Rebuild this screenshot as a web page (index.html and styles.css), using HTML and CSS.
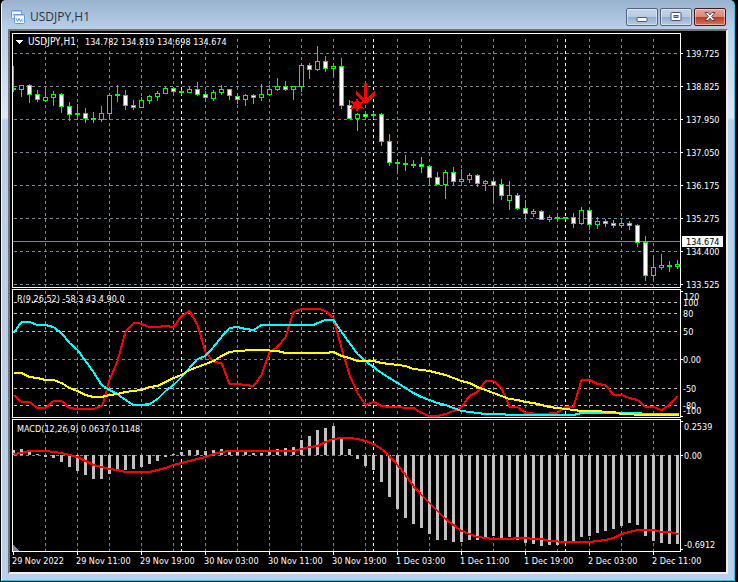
FILE: index.html
```html
<!DOCTYPE html>
<html lang="en">
<head>
<meta charset="utf-8">
<title>USDJPY,H1</title>
<link rel="stylesheet" href="styles.css">
</head>
<body>
<main class="window">
  <header class="titlebar">
    <svg class="app-icon" viewBox="0 0 16 16" aria-hidden="true">
      <rect x="1.500" y="1.500" width="10" height="8" rx="1" fill="#f4f9ff" stroke="#5f9ae0"/>
      <path d="M1.500 2h10" stroke="#5f9ae0"/>
      <path d="M3 6.500l1-1.500 1 1" fill="none" stroke="#5f9ae0"/>
      <rect x="4.500" y="5.500" width="10" height="9" rx="1" fill="#f4f9ff" stroke="#5f9ae0"/>
      <path d="M4.500 6h10" stroke="#5f9ae0"/>
      <path d="M6 9l1.500 3.500 1.500-3 1.500 3 1-2 1 2" fill="none" stroke="#5f9ae0"/>
    </svg>
    <h1 class="title">USDJPY,H1</h1>
    <button class="control" type="button" aria-label="Minimize">
      <svg viewBox="0 0 12 12"><rect x="1" y="6.500" width="10" height="4" rx="1" fill="#fff" stroke="#4c5567"/></svg>
    </button>
    <button class="control" type="button" aria-label="Maximize">
      <svg viewBox="0 0 12 12"><rect x="1" y="1.500" width="10" height="8" rx="1" fill="#fff" stroke="#4c5567"/><rect x="4" y="4.500" width="4" height="2" fill="#9bb6d3" stroke="#4c5567"/></svg>
    </button>
    <button class="control close" type="button" aria-label="Close">
      <svg viewBox="0 0 12 12"><path d="M1 1.500h3L6 3.800 8 1.500h3L7.700 5.500 11 9.500H8L6 7.200 4 9.500H1L4.300 5.500z" fill="#fff" stroke="#4c4a5c"/></svg>
    </button>
  </header>
  <section class="client">
    <svg class="pane" id="price" viewBox="10 31 716 257" role="img" aria-label="Price chart"></svg>
    <svg class="pane" id="range" viewBox="10 288 716 130" role="img" aria-label="R indicator"></svg>
    <svg class="pane" id="macd" viewBox="10 418 716 154" role="img" aria-label="MACD indicator"></svg>
  </section>
</main>
<script src="chart.js"></script>
</body>
</html>
```
FILE: styles.css
```css
* { box-sizing: border-box; }

body {
  margin: 0;
  padding: 0 3px 1px 1px;
  background: #000;
}

.window {
  padding: 0 6px 6px;
  border: solid;
  border-width: 0 1px 1px;
  border-color: #fff #3cc4e4 #3cc4e4 #f4f8fc;
  border-radius: 5px 5px 0 0;
  background: linear-gradient(#99b2cf 0, #b9d1ea 30px, #dce7f5 118px, #b9cfea 120px);
}

.titlebar {
  display: flex;
  align-items: center;
  gap: 2px;
  height: 29px;
  padding: 5px 2px 0 2px;
}

.app-icon {
  width: 16px;
  height: 16px;
}

.title {
  flex: 1;
  margin: 0;
  padding-left: 2px;
  font: 12px/16px "Open Sans", "Noto Sans", sans-serif;
  color: #2b3340;
}

.control {
  display: flex;
  align-items: center;
  justify-content: center;
  width: 32px;
  height: 18px;
  padding: 0;
  border: 1px solid #53647c;
  border-radius: 2px;
  background: linear-gradient(#c3d5e9 0, #b5cae2 48%, #92aecb 50%, #b4cce5 100%);
  box-shadow: inset 0 0 0 1px #ffffff70;
}

.control svg {
  width: 12px;
  height: 12px;
}

.close {
  border-color: #43151d;
  background: linear-gradient(#e6a59b 0, #d98877 48%, #b93a22 50%, #d17560 100%);
}

.client {
  border: 2px solid;
  border-color: #77726f #f0efed #f0efed #77726f;
  background: #000;
}

.pane {
  display: block;
  width: 100%;
  height: auto;
  overflow: visible;
  shape-rendering: crispEdges;
  font-family: "DejaVu Sans Condensed", "DejaVu Sans", sans-serif;
  font-size: 9px;
}

.pane text { fill: #fff; }
.pane .symbol { font-size: 10px; }
.pane .bid-text { fill: #000; }
.frame { fill: none; stroke: #fff; }
.tick { stroke: #fff; }
.grid { stroke: #778899; stroke-dasharray: 3 3; }
.level { stroke: #c0c0c0; stroke-dasharray: 3 3; }
.day { stroke: #fff; stroke-dasharray: 3 3; }
.bid { stroke: #778899; }
.bid-box { fill: #fff; }
.wick { stroke: #00ff00; }
.doji { fill: #00ff00; }
.up { fill: #000; stroke: #00ff00; }
.down { fill: #fff; stroke: #00ff00; }
.bar { fill: #c0c0c0; }
.line { fill: none; stroke-width: 2; }
.red { stroke: #ff0000; }
.cyan { stroke: #00ffff; }
.yellow { stroke: #ffff00; }
.signal { fill: #ff0000; }
.corner { fill: #778899; }
```
FILE: chart.js
```js
const NS = "http://www.w3.org/2000/svg";
const LEFT = 12, RIGHT = 680, FIRST = 13, STEP = 8;

function add(svg, name, cls, attrs, text) {
  const el = document.createElementNS(NS, name);
  if (cls) el.setAttribute("class", cls);
  for (const key in attrs) el.setAttribute(key, attrs[key]);
  if (text !== undefined) el.textContent = text;
  svg.appendChild(el);
}
function line(svg, cls, x1, y1, x2, y2) {
  add(svg, "line", cls, { x1, y1, x2, y2 });
}
function label(svg, x, y, text, cls) {
  add(svg, "text", cls, { x, y }, text);
}
function across(svg, cls, y) {
  line(svg, cls, 14, y + 0.5, RIGHT, y + 0.5);
}
function tick(svg, y) {
  line(svg, "tick", RIGHT, y + 0.5, RIGHT + 3, y + 0.5);
}
function columns(svg, top, bottom) {
  const start = top + ((33 - top) % 6 + 6) % 6;
  for (let x = 45; x < RIGHT; x += 32) line(svg, "grid", x + 0.5, start, x + 0.5, bottom);
  for (const x of [181, 373, 565]) line(svg, "day", x + 0.5, start, x + 0.5, bottom);
}
function frame(svg, top, bottom) {
  add(svg, "rect", "frame", { x: LEFT + 0.5, y: top + 0.5, width: RIGHT - LEFT, height: bottom - top });
}
function curve(svg, color, data) {
  const points = data.trim().split(/\s+/).map(p => p.split(",").map(Number).map((v, i) => v + (i ? 0 : 0.5)).join(","));
  add(svg, "polyline", "line " + color, { points: points.join(" ") });
}

/* Price pane */
const price = document.getElementById("price");
columns(price, 34, 287);
["139.725", "138.825", "137.950", "137.050", "136.175", "135.275", "134.400", "133.525"].forEach((value, i) => {
  const y = 53 + 33 * i;
  across(price, "grid", y);
  tick(price, y);
  label(price, 686, y + 4, value);
});
line(price, "bid", 13, 241.5, RIGHT, 241.5);

/* high, body top, body bottom, low, kind: u = rising, d = falling, x = flat */
const candles = `
66 88 89 91 x;85 85 89 96 u;84 85 94 102 d;90 94 99 101 d;90 97 100 101 u;91 94 97 105 u;93 94 106 112 d;102 106 114 120 d;
104 113 114 119 x;108 113 118 122 d;112 118 119 122 x;106 113 119 121 u;93 95 113 116 u;85 94 95 101 x;90 95 105 109 d;
100 105 107 109 d;97 100 107 107 u;95 96 100 103 u;91 93 96 100 u;87 88 93 93 u;87 88 91 92 d;90 91 92 94 x;87 89 92 92 u;
82 89 94 95 d;91 94 97 101 d;90 92 98 100 u;85 89 92 94 u;89 89 95 99 d;93 96 99 103 d;94 95 99 105 u;94 95 97 103 d;
84 94 97 100 u;85 89 94 95 u;78 86 89 90 u;81 86 89 90 d;86 86 89 99 u;63 65 86 91 u;63 65 69 78 d;46 61 69 70 u;
56 61 68 71 d;63 66 68 75 u;58 66 105 108 d;100 105 118 118 d;113 114 118 130 u;111 114 116 118 d;112 114 115 118 x;
113 114 141 145 d;134 141 162 165 d;159 162 163 173 x;155 163 164 170 x;160 164 165 167 x;157 164 166 172 d;165 166 177 184 d;
172 177 184 184 d;170 172 184 198 u;167 172 181 184 d;169 179 181 183 u;173 175 179 182 u;174 175 183 186 d;180 181 183 190 u;
179 181 185 202 d;179 184 195 199 d;181 195 200 209 u;193 195 208 209 d;200 208 213 217 d;209 211 213 216 u;210 211 219 219 d;
215 217 219 221 u;215 217 218 220 x;217 217 218 219 x;213 217 223 227 d;207 210 223 224 u;208 210 224 229 d;217 221 224 228 u;
219 221 223 226 d;220 223 225 227 d;221 223 225 227 u;221 223 225 229 d;224 225 242 246 d;236 242 275 280 d;257 267 275 279 u;
254 265 267 269 u;261 265 266 271 x;260 264 266 268 u`;
candles.split(";").forEach((row, i) => {
  const [high, top, bottom, low, kind] = row.trim().split(" ");
  const x = FIRST + STEP * i;
  const t = +top, b = +bottom;
  line(price, "wick", x + 0.5, +high, x + 0.5, +low + 1);
  if (kind === "x") {
    const from = Math.max(x - 2, FIRST);
    add(price, "rect", "doji", { x: from, y: t, width: x + 3 - from, height: b - t + 1 });
  } else {
    add(price, "rect", kind === "u" ? "up" : "down", { x: x - 1.5, y: t + 0.5, width: 4, height: b - t });
  }
});
add(price, "path", "signal", { d: "M364 83H367V98L375 91V95L367 103H364L356 95V91L364 98Z" });
add(price, "path", "signal", { d: "M357 98L359 102 364 101 361 105 364 109 359 108 357 112 355 108 350 109 353 105 350 101 355 102Z" });
frame(price, 33, 287);
add(price, "path", "bid-box", { d: "M16 40H23L19.500 44Z" });
label(price, 28, 45, "USDJPY,H1", "symbol");
label(price, 85, 45, "134.782 134.819 134.698 134.674");
add(price, "rect", "bid-box", { x: 682, y: 236, width: 41, height: 11 });
label(price, 686, 245, "134.674", "bid-text");

/* R pane */
const range = document.getElementById("range");
columns(range, 290, 417);
for (const y of [302, 313, 331, 388, 405]) across(range, "level", y);
across(range, "grid", 359);
for (const y of [291, 359, 416]) tick(range, y);
curve(range, "red", `13,395 21,402 29,402 37,408 45,408 53,401 61,401 69,408 77,409 93,409 101,406 103,402 109,380 117,361 125,332
133,323 138,323 149,327 157,327 165,326 173,327 181,316 189,311 197,325 205,352 213,362 221,363 229,384 237,384 245,385 253,386
261,375 269,352 277,347 285,337 293,312 301,309 319,309 325,311 333,318 341,348 349,375 357,393 365,405 373,402 381,406 389,407
413,408 421,413 429,416 437,416 445,414 453,411 461,407 469,396 477,392 485,381 493,381 501,388 509,407 517,407 525,413 541,414
557,413 565,407 573,407 581,380 589,380 597,384 605,385 613,395 621,395 629,398 637,400 645,407 653,407 661,410 669,405 677,396`);
curve(range, "cyan", `13,333 21,322 29,322 37,325 45,325 53,327 61,333 69,343 77,350 85,361 93,372 101,385 109,390 117,394 125,400
133,405 141,405 149,404 157,399 165,391 173,385 181,377 189,368 197,359 205,356 213,347 221,337 229,328 237,327 245,329 253,330
261,325 313,325 317,323 325,320 333,320 341,332 349,343 357,354 365,361 373,367 381,373 389,378 397,383 405,388 413,393 421,397
429,400 437,403 445,405 453,408 461,411 469,412 477,413 485,414 501,414 509,415 573,415 581,413 637,413 645,414 678,414`);
curve(range, "yellow", `13,373 21,373 29,377 37,378 45,380 53,380 61,383 69,388 77,391 85,395 93,397 101,397 109,395 117,394
125,392 133,391 141,390 149,387 157,386 165,382 173,378 181,375 189,370 197,367 205,364 213,361 221,356 229,352 237,351 253,350
261,350 277,351 285,353 325,353 333,352 341,356 349,358 357,361 373,361 381,363 389,364 397,365 405,366 413,369 421,370 429,371
437,373 445,375 453,378 461,381 469,383 477,387 485,390 493,393 501,396 509,399 517,400 525,402 533,403 541,405 549,407 557,408
565,409 573,410 581,411 597,411 605,412 613,412 621,414 645,415 678,415`);
frame(range, 289, 417);
label(range, 17, 302, "R(9,26,52) -58.3 43.4 90.0");
[[296, "120"], [302, "100"], [313, "80"], [331, "50"], [359, "0.00"], [388, "-50"], [405, "-80"], [410, "-100"]].forEach(([y, text]) => {
  label(range, text === "120" ? 684 : 683, y + 4, text);
});

/* MACD pane and time scale */
const macd = document.getElementById("macd");
columns(macd, 420, 551);
across(macd, "grid", 455);
const bars = [450,449,451,454,457,458,462,467,471,475,479,479,474,469,470,469,467,464,461,457,454,452,450,450,451,450,449,450,451,
  452,453,453,452,449,448,447,440,436,430,428,426,437,449,459,466,470,482,497,509,518,524,528,534,540,540,542,542,540,540,537,536,
  538,537,540,543,544,546,545,545,543,542,537,536,533,531,529,526,523,525,536,541,543,544,544];
bars.forEach((y, i) => {
  const x = Math.max(FIRST + STEP * i - 1, FIRST);
  const right = FIRST + STEP * i + 2;
  add(macd, "rect", "bar", { x, y: Math.min(y, 455), width: right - x, height: Math.abs(y - 455) });
});
curve(macd, "red", `13,454 21,453 29,451 45,451 53,452 61,453 69,455 77,457 85,461 93,465 101,467 109,469 117,470 125,472 149,472
157,470 165,468 173,465 181,463 189,461 197,459 205,457 213,454 221,452 229,451 293,451 301,449 309,447 317,446 325,442 333,439
341,438 349,438 357,439 365,441 373,444 381,449 389,456 397,465 405,475 413,486 421,495 429,503 437,511 445,519 453,525 461,531
469,534 477,537 485,538 493,539 509,539 517,538 541,539 549,541 565,542 589,542 597,541 605,540 613,538 621,534 629,532 637,530
653,530 661,532 669,532 678,534`);
add(macd, "path", "corner", { d: "M13 545L19 551H13Z" });
frame(macd, 419, 551);
for (const y of [421, 455, 549]) tick(macd, y);
label(macd, 17, 432, "MACD(12,26,9) 0.0637 0.1148");
label(macd, 684, 430, "0.2539");
label(macd, 684, 459, "0.00");
label(macd, 684, 548, "-0.6912");
["29 Nov 2022", "29 Nov 11:00", "29 Nov 19:00", "30 Nov 03:00", "30 Nov 11:00", "30 Nov 19:00", "1 Dec 03:00", "1 Dec 11:00",
  "1 Dec 19:00", "2 Dec 03:00", "2 Dec 11:00"].forEach((text, i) => {
  const x = FIRST + 64 * i;
  line(macd, "tick", x + 0.5, 551, x + 0.5, 555);
  label(macd, x - 1, 564, text);
});
```
